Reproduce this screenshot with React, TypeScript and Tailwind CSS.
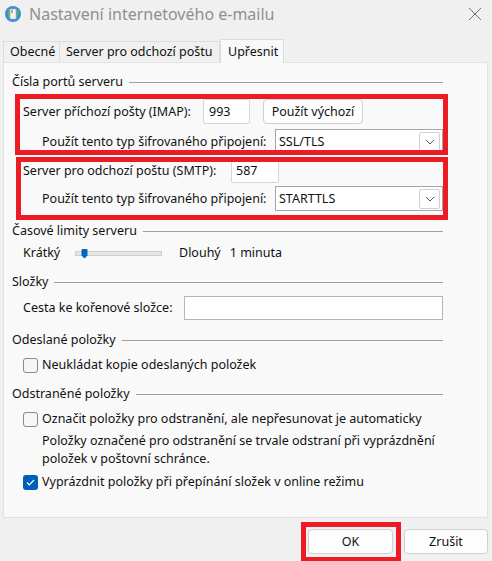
import React from 'react';

const font = { fontFamily: '"Noto Sans", "Open Sans", sans-serif' };

const GroupHeader = ({ title, className }: { title: string; className: string }) => (
  <div className={`flex items-center h-4 pl-[8px] pr-[44px] ${className}`}>
    <span className="whitespace-nowrap">{title}</span>
    <div className="flex-1 h-px bg-[#a0a0a0] ml-[6px]" />
  </div>
);

const Chevron = () => (
  <svg width="10" height="6" viewBox="0 0 10 6">
    <path d="M1 1 L5 5 L9 1" fill="none" stroke="#555" strokeWidth="1" />
  </svg>
);

const Select = ({ value }: { value: string }) => (
  <div className="ml-auto w-[168px] h-[25px] bg-white border border-[#a6a6a6] flex items-center pl-[3px] pr-[2px]">
    <span className="flex-1">{value}</span>
    <div className="w-[21px] h-[20px] border border-[#d0d0d0] rounded-[2px] flex items-center justify-center">
      <Chevron />
    </div>
  </div>
);

const Checkbox = ({ checked }: { checked?: boolean }) =>
  checked ? (
    <div className="w-[15px] h-[15px] rounded-[3px] bg-[#005fb8] flex items-center justify-center shrink-0">
      <svg width="9" height="7" viewBox="0 0 9 7">
        <path d="M1 3.5 L3.3 5.8 L8 1" fill="none" stroke="white" strokeWidth="1.2" />
      </svg>
    </div>
  ) : (
    <div className="w-[15px] h-[15px] rounded-[3px] border border-[#8a8a8a] bg-[#f6f6f6] shrink-0" />
  );

const App = () => {
  return (
    <div className="relative w-[492px] h-[561px] bg-[#f0f0f0] text-[12.5px] leading-4 text-[#111] overflow-hidden whitespace-nowrap" style={font}>
      {/* title bar */}
      <div className="flex items-center h-[27px] pl-[4px] pr-[10px]">
        <svg width="18" height="19" viewBox="0 0 18 19">
          <circle cx="9" cy="10" r="8" fill="#3a8fd6" />
          <path d="M4 6 Q9 3 15 7 L13 14 Q8 17 4 13 Z" fill="#5bbf4a" opacity="0.8" />
          <rect x="6" y="5" width="6" height="10" fill="#f4f4f4" stroke="#9aa" strokeWidth="0.6" />
          <rect x="7.5" y="6" width="1" height="3" fill="#e02020" />
        </svg>
        <span className="ml-[7px] text-[16px] text-[#8f8f8f]">Nastavení internetového e-mailu</span>
        <svg className="ml-auto" width="14" height="14" viewBox="0 0 14 14">
          <path d="M1 1 L13 13 M13 1 L1 13" stroke="#707070" strokeWidth="1" />
        </svg>
      </div>

      {/* tabs */}
      <div className="flex items-end h-[35px] pl-[3px]">
        <div className="h-[21px] w-[57px] border border-b-0 border-[#dcdcdc] flex items-center pl-[6px]">Obecné</div>
        <div className="h-[21px] w-[160px] border border-b-0 border-l-0 border-[#dcdcdc] flex items-center pl-[6px]">Server pro odchozí poštu</div>
        <div className="h-[24px] w-[64px] border border-b-0 border-[#dcdcdc] bg-[#f9f9f9] flex items-center pl-[7px] -mb-px relative">Upřesnit</div>
      </div>

      {/* panel */}
      <div className="ml-[3px] mr-[4px] h-[456px] border border-[#e2e2e2] bg-[#f9f9f9] flex flex-col">
        <GroupHeader title="Čísla portů serveru" className="mt-[11px]" />

        <div className="flex items-center h-[25px] mt-[9px] pl-[19px]">
          <span className="w-[180px]">Server příchozí pošty (IMAP):</span>
          <div className="w-[47px] h-[25px] bg-white border border-[#d6d6d6] rounded-[2px] flex items-center pl-[5px]">993</div>
          <div className="ml-[13px] w-[100px] h-[25px] bg-[#fdfdfd] border border-[#d0d0d0] rounded-[4px] flex items-center justify-center">Použít výchozí</div>
        </div>
        <div className="flex items-center h-[25px] mt-[5px] pl-[38px] pr-[44px]">
          <span>Použít tento typ šifrovaného připojení:</span>
          <Select value="SSL/TLS" />
        </div>

        <div className="flex items-center h-[25px] mt-[4px] pl-[19px]">
          <span className="w-[208px]">Server pro odchozí poštu (SMTP):</span>
          <div className="w-[48px] h-[25px] bg-white border border-[#d6d6d6] rounded-[2px] flex items-center pl-[4px]">587</div>
        </div>
        <div className="flex items-center h-[25px] mt-[3px] pl-[38px] pr-[44px]">
          <span>Použít tento typ šifrovaného připojení:</span>
          <Select value="STARTTLS" />
        </div>

        <GroupHeader title="Časové limity serveru" className="mt-[12px]" />
        <div className="flex items-center h-4 mt-[6px] pl-[19px]">
          <span className="w-[52px]">Krátký</span>
          <div className="relative w-[87px] h-[5px] bg-[#e6e6e6] border border-[#cfcfcf]">
            <svg className="absolute left-[5px] -top-[3px]" width="7" height="10" viewBox="0 0 7 10">
              <path d="M0.5 1 Q0.5 0 1.5 0 L5.5 0 Q6.5 0 6.5 1 L6.5 6.5 L3.5 9.5 L0.5 6.5 Z" fill="#0067c0" />
            </svg>
          </div>
          <span className="ml-[17px]">Dlouhý</span>
          <span className="ml-[9px]">1 minuta</span>
        </div>

        <GroupHeader title="Složky" className="mt-[13px]" />
        <div className="flex items-center h-[24px] mt-[6px] pl-[19px] pr-[44px]">
          <span>Cesta ke kořenové složce:</span>
          <div className="ml-auto w-[259px] h-[24px] bg-white border border-[#b5b5b5]" />
        </div>

        <GroupHeader title="Odeslané položky" className="mt-[12px]" />
        <div className="flex items-center h-4 mt-[9px] pl-[19px]">
          <Checkbox />
          <span className="ml-[4px]">Neukládat kopie odeslaných položek</span>
        </div>

        <GroupHeader title="Odstraněné položky" className="mt-[13px]" />
        <div className="flex items-center h-4 mt-[9px] pl-[19px]">
          <Checkbox />
          <span className="ml-[4px]">Označit položky pro odstranění, ale nepřesunovat je automaticky</span>
        </div>
        <div className="mt-[5px] pl-[38px] leading-[18px]">
          <div>Položky označené pro odstranění se trvale odstraní při vyprázdnění</div>
          <div>položek v poštovní schránce.</div>
        </div>
        <div className="flex items-center h-4 mt-[6px] pl-[19px]">
          <Checkbox checked />
          <span className="ml-[4px]">Vyprázdnit položky při přepínání složek v online režimu</span>
        </div>
      </div>

      {/* buttons */}
      <div className="flex justify-end gap-[11px] mt-[11px] pr-[4px]">
        <div className="w-[85px] h-[25px] bg-[#fdfdfd] border border-[#d0d0d0] rounded-[4px] flex items-center justify-center">OK</div>
        <div className="w-[84px] h-[25px] bg-[#fdfdfd] border border-[#d0d0d0] rounded-[4px] flex items-center justify-center">Zrušit</div>
      </div>

      {/* red annotation boxes */}
      <div className="absolute left-[15px] top-[94px] w-[433px] h-[61px] border-[5px] border-[#ed1c24]" />
      <div className="absolute left-[16px] top-[157px] w-[432px] h-[63px] border-[5px] border-[#ed1c24]" />
      <div className="absolute left-[301px] top-[522px] w-[100px] h-[40px] border-[5px] border-[#ed1c24]" />
    </div>
  );
};

export default App;
